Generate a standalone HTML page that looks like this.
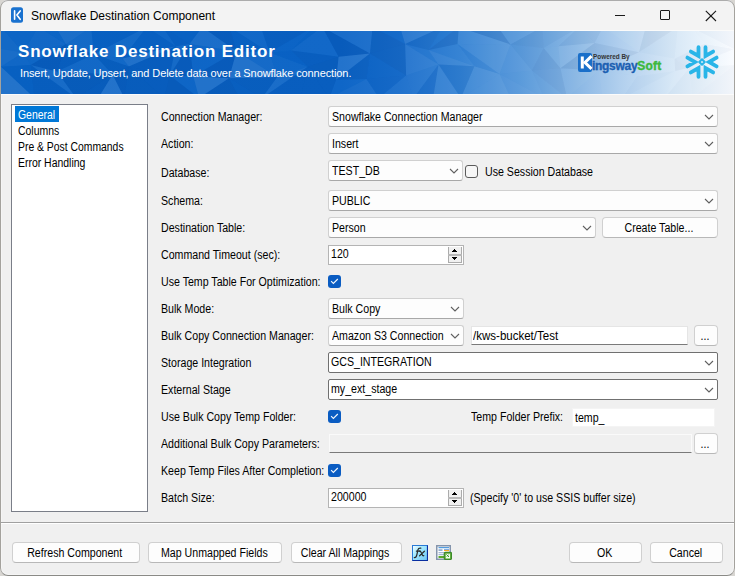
<!DOCTYPE html>
<html><head><meta charset="utf-8">
<style>
*{margin:0;padding:0;box-sizing:border-box}
html,body{width:735px;height:576px;overflow:hidden;background:#d8d6d2}
body{font-family:"Liberation Sans",sans-serif;font-size:12px;color:#000;position:relative}
.a{position:absolute}
#bg{position:absolute;left:0;top:0;width:735px;height:576px;border-radius:8px;background:#f0f0f0;overflow:hidden;box-shadow:inset 0 0 0 2px #f5f5f5}
#frame{position:absolute;left:0;top:0;width:735px;height:576px;border:1px solid #a4a29d;border-top-color:#acacac;border-bottom-color:#8a8a86;border-radius:8px}
#tb{position:absolute;left:0;top:0;width:735px;height:31px;background:#f3f3f3}
#banner{position:absolute;left:1px;top:31px;width:733px;height:63px;overflow:hidden;
background:linear-gradient(90deg,#0862c4 0px,#0a63c6 340px,#176ccb 400px,#3080d3 460px,#5a9adb 520px,#84b4e3 570px,#b0cfee 620px,#d6e7f6 670px,#edf5fc 710px,#fafcff 733px)}
.t{position:absolute;white-space:nowrap;font-size:12px;line-height:14px;transform:scaleX(0.885);transform-origin:0 0}
.ct{position:absolute;white-space:nowrap;font-size:12px;line-height:14px;text-align:center}
.ct span{display:inline-block;transform:scaleX(0.885);transform-origin:50% 0}
.cb{position:absolute;background:#fdfdfd;border:1px solid #d0d0d0;border-bottom-color:#a8a8a8;border-radius:3px}
.cbd{position:absolute;background:#fff;border:1px solid #707070;border-radius:2px}
.btn{position:absolute;background:#fdfdfd;border:1px solid #d0d0d0;border-bottom-color:#b8b8b8;border-radius:4px}
.tx{position:absolute;background:#fff;border:1px solid #e5e5e5;border-bottom:1px solid #7a7a7a}
.num{position:absolute;background:#fff;border:1px solid #b4b4b4}
.chk{position:absolute;width:13px;height:13px;background:#0a5cc2;border-radius:3px}
</style></head>
<body>
<div id="bg">

<div id="tb"></div>
<svg class="a" style="left:11px;top:7px" width="12" height="16" viewBox="0 0 12 16"><rect x="0" y="0.3" width="12" height="15.4" rx="2.5" fill="#1a72cf"/><path d="M3.6 3.9V12.3M9.2 3.9L5.9 8.1L9.2 12.3" stroke="#fff" stroke-width="1.6" fill="none" stroke-linecap="round" stroke-linejoin="round"/></svg>
<div class="t" style="left:31px;top:9px;font-size:12px;letter-spacing:0;transform:none">Snowflake Destination Component</div>
<div class="a" style="left:615px;top:15px;width:10px;height:1px;background:#1a1a1a"></div>
<div class="a" style="left:660px;top:10px;width:10px;height:10px;border:1px solid #1a1a1a;border-radius:1px"></div>
<svg class="a" style="left:705px;top:10px" width="12" height="12" viewBox="0 0 12 12"><path d="M0.8 0.8L11 11M11 0.8L0.8 11" stroke="#1a1a1a" stroke-width="1.1"/></svg>
<div class="a" style="left:1px;top:30px;width:733px;height:1px;background:#fbfbfa"></div>
<div id="banner"></div>
<svg class="a" style="left:1px;top:31px" width="733" height="63" viewBox="0 0 733 63"><polygon points="0.0,-4 37.2,-4 22.2,21.6" fill="#fff" fill-opacity="0.025"/><polygon points="0.0,-4 22.2,21.6 0.0,17.8" fill="#fff" fill-opacity="0.046"/><polygon points="0.0,17.8 22.2,21.6 0.0,35.7" fill="#fff" fill-opacity="0.071"/><polygon points="22.2,21.6 29.8,34.0 0.0,35.7" fill="#fff" fill-opacity="0.035"/><polygon points="0.0,35.7 29.8,34.0 33.5,67" fill="#002060" fill-opacity="0.022"/><polygon points="0.0,35.7 33.5,67 0.0,67" fill="#fff" fill-opacity="0.109"/><polygon points="37.2,-4 54.6,-4 64.9,13.3" fill="#fff" fill-opacity="0.019"/><polygon points="37.2,-4 64.9,13.3 22.2,21.6" fill="#fff" fill-opacity="0.044"/><polygon points="22.2,21.6 64.9,13.3 29.8,34.0" fill="#fff" fill-opacity="0.026"/><polygon points="64.9,13.3 56.0,40.6 29.8,34.0" fill="#002060" fill-opacity="0.105"/><polygon points="29.8,34.0 56.0,40.6 75.1,67" fill="#fff" fill-opacity="0.064"/><polygon points="29.8,34.0 75.1,67 33.5,67" fill="#002060" fill-opacity="0.063"/><polygon points="54.6,-4 90.2,-4 64.9,13.3" fill="#fff" fill-opacity="0.080"/><polygon points="90.2,-4 92.8,23.3 64.9,13.3" fill="#fff" fill-opacity="0.047"/><polygon points="64.9,13.3 92.8,23.3 56.0,40.6" fill="#002060" fill-opacity="0.063"/><polygon points="92.8,23.3 111.6,43.4 56.0,40.6" fill="#fff" fill-opacity="0.043"/><polygon points="56.0,40.6 111.6,43.4 75.1,67" fill="#002060" fill-opacity="0.108"/><polygon points="111.6,43.4 97.3,67 75.1,67" fill="#002060" fill-opacity="0.091"/><polygon points="90.2,-4 145.7,-4 92.8,23.3" fill="#002060" fill-opacity="0.033"/><polygon points="145.7,-4 121.5,27.5 92.8,23.3" fill="#fff" fill-opacity="0.046"/><polygon points="92.8,23.3 121.5,27.5 127.8,35.6" fill="#fff" fill-opacity="0.038"/><polygon points="92.8,23.3 127.8,35.6 111.6,43.4" fill="#002060" fill-opacity="0.079"/><polygon points="111.6,43.4 127.8,35.6 123.3,67" fill="#002060" fill-opacity="0.104"/><polygon points="111.6,43.4 123.3,67 97.3,67" fill="#fff" fill-opacity="0.106"/><polygon points="145.7,-4 161.6,-4 174.8,15.3" fill="#fff" fill-opacity="0.033"/><polygon points="145.7,-4 174.8,15.3 121.5,27.5" fill="#002060" fill-opacity="0.030"/><polygon points="121.5,27.5 174.8,15.3 127.8,35.6" fill="#fff" fill-opacity="0.094"/><polygon points="174.8,15.3 168.7,44.5 127.8,35.6" fill="#002060" fill-opacity="0.075"/><polygon points="127.8,35.6 168.7,44.5 163.3,67" fill="#002060" fill-opacity="0.076"/><polygon points="127.8,35.6 163.3,67 123.3,67" fill="#002060" fill-opacity="0.088"/><polygon points="161.6,-4 201.2,-4 188.5,13.1" fill="#002060" fill-opacity="0.028"/><polygon points="161.6,-4 188.5,13.1 174.8,15.3" fill="#002060" fill-opacity="0.043"/><polygon points="174.8,15.3 188.5,13.1 168.7,44.5" fill="#fff" fill-opacity="0.050"/><polygon points="188.5,13.1 192.3,45.2 168.7,44.5" fill="#002060" fill-opacity="0.105"/><polygon points="168.7,44.5 192.3,45.2 198.0,67" fill="#fff" fill-opacity="0.023"/><polygon points="168.7,44.5 198.0,67 163.3,67" fill="#002060" fill-opacity="0.100"/><polygon points="201.2,-4 228.4,-4 235.5,20.2" fill="#002060" fill-opacity="0.093"/><polygon points="201.2,-4 235.5,20.2 188.5,13.1" fill="#fff" fill-opacity="0.076"/><polygon points="188.5,13.1 235.5,20.2 192.3,45.2" fill="#fff" fill-opacity="0.023"/><polygon points="235.5,20.2 228.0,47.3 192.3,45.2" fill="#002060" fill-opacity="0.107"/><polygon points="192.3,45.2 228.0,47.3 198.0,67" fill="#fff" fill-opacity="0.103"/><polygon points="228.0,47.3 238.4,67 198.0,67" fill="#002060" fill-opacity="0.097"/><polygon points="228.4,-4 259.9,-4 268.5,21.5" fill="#fff" fill-opacity="0.035"/><polygon points="228.4,-4 268.5,21.5 235.5,20.2" fill="#002060" fill-opacity="0.034"/><polygon points="235.5,20.2 268.5,21.5 276.3,46.1" fill="#fff" fill-opacity="0.052"/><polygon points="235.5,20.2 276.3,46.1 228.0,47.3" fill="#fff" fill-opacity="0.101"/><polygon points="228.0,47.3 276.3,46.1 261.0,67" fill="#002060" fill-opacity="0.068"/><polygon points="228.0,47.3 261.0,67 238.4,67" fill="#002060" fill-opacity="0.052"/><polygon points="259.9,-4 312.3,-4 268.5,21.5" fill="#002060" fill-opacity="0.063"/><polygon points="312.3,-4 289.9,19.5 268.5,21.5" fill="#fff" fill-opacity="0.012"/><polygon points="268.5,21.5 289.9,19.5 306.5,35.7" fill="#002060" fill-opacity="0.010"/><polygon points="268.5,21.5 306.5,35.7 276.3,46.1" fill="#fff" fill-opacity="0.027"/><polygon points="276.3,46.1 306.5,35.7 261.0,67" fill="#fff" fill-opacity="0.066"/><polygon points="306.5,35.7 299.6,67 261.0,67" fill="#002060" fill-opacity="0.062"/><polygon points="312.3,-4 321.2,-4 289.9,19.5" fill="#002060" fill-opacity="0.021"/><polygon points="321.2,-4 337.6,25.8 289.9,19.5" fill="#fff" fill-opacity="0.035"/><polygon points="289.9,19.5 337.6,25.8 306.5,35.7" fill="#002060" fill-opacity="0.061"/><polygon points="337.6,25.8 335.1,48.8 306.5,35.7" fill="#002060" fill-opacity="0.086"/><polygon points="306.5,35.7 335.1,48.8 328.3,67" fill="#002060" fill-opacity="0.071"/><polygon points="306.5,35.7 328.3,67 299.6,67" fill="#002060" fill-opacity="0.061"/><polygon points="321.2,-4 371.6,-4 369.0,22.4" fill="#fff" fill-opacity="0.063"/><polygon points="321.2,-4 369.0,22.4 337.6,25.8" fill="#002060" fill-opacity="0.104"/><polygon points="337.6,25.8 369.0,22.4 335.1,48.8" fill="#fff" fill-opacity="0.104"/><polygon points="369.0,22.4 365.4,48.1 335.1,48.8" fill="#002060" fill-opacity="0.066"/><polygon points="335.1,48.8 365.4,48.1 328.3,67" fill="#fff" fill-opacity="0.024"/><polygon points="365.4,48.1 378.1,67 328.3,67" fill="#fff" fill-opacity="0.054"/><polygon points="371.6,-4 399.1,-4 404.1,13.1" fill="#002060" fill-opacity="0.017"/><polygon points="371.6,-4 404.1,13.1 369.0,22.4" fill="#002060" fill-opacity="0.088"/><polygon points="369.0,22.4 404.1,13.1 405.1,44.6" fill="#002060" fill-opacity="0.082"/><polygon points="369.0,22.4 405.1,44.6 365.4,48.1" fill="#002060" fill-opacity="0.024"/><polygon points="365.4,48.1 405.1,44.6 378.1,67" fill="#002060" fill-opacity="0.032"/><polygon points="405.1,44.6 412.6,67 378.1,67" fill="#fff" fill-opacity="0.050"/><polygon points="399.1,-4 441.5,-4 404.1,13.1" fill="#fff" fill-opacity="0.093"/><polygon points="441.5,-4 427.5,18.9 404.1,13.1" fill="#002060" fill-opacity="0.053"/><polygon points="404.1,13.1 427.5,18.9 437.5,33.4" fill="#fff" fill-opacity="0.030"/><polygon points="404.1,13.1 437.5,33.4 405.1,44.6" fill="#fff" fill-opacity="0.082"/><polygon points="405.1,44.6 437.5,33.4 412.6,67" fill="#fff" fill-opacity="0.054"/><polygon points="437.5,33.4 432.1,67 412.6,67" fill="#002060" fill-opacity="0.043"/><polygon points="441.5,-4 457.8,-4 427.5,18.9" fill="#002060" fill-opacity="0.016"/><polygon points="457.8,-4 456.5,13.1 427.5,18.9" fill="#002060" fill-opacity="0.089"/><polygon points="427.5,18.9 456.5,13.1 473.4,35.3" fill="#fff" fill-opacity="0.036"/><polygon points="427.5,18.9 473.4,35.3 437.5,33.4" fill="#fff" fill-opacity="0.088"/><polygon points="437.5,33.4 473.4,35.3 459.9,67" fill="#002060" fill-opacity="0.051"/><polygon points="437.5,33.4 459.9,67 432.1,67" fill="#fff" fill-opacity="0.092"/><polygon points="457.8,-4 496.9,-4 509.4,13.5" fill="#002060" fill-opacity="0.092"/><polygon points="457.8,-4 509.4,13.5 456.5,13.1" fill="#fff" fill-opacity="0.075"/><polygon points="456.5,13.1 509.4,13.5 498.5,42.9" fill="#fff" fill-opacity="0.071"/><polygon points="456.5,13.1 498.5,42.9 473.4,35.3" fill="#002060" fill-opacity="0.016"/><polygon points="473.4,35.3 498.5,42.9 459.9,67" fill="#fff" fill-opacity="0.084"/><polygon points="498.5,42.9 509.7,67 459.9,67" fill="#fff" fill-opacity="0.086"/><polygon points="496.9,-4 541.4,-4 509.4,13.5" fill="#fff" fill-opacity="0.046"/><polygon points="541.4,-4 542.6,17.0 509.4,13.5" fill="#002060" fill-opacity="0.052"/><polygon points="509.4,13.5 542.6,17.0 530.9,39.5" fill="#002060" fill-opacity="0.018"/><polygon points="509.4,13.5 530.9,39.5 498.5,42.9" fill="#fff" fill-opacity="0.029"/><polygon points="498.5,42.9 530.9,39.5 543.1,67" fill="#fff" fill-opacity="0.012"/><polygon points="498.5,42.9 543.1,67 509.7,67" fill="#fff" fill-opacity="0.034"/><polygon points="541.4,-4 578.3,-4 542.6,17.0" fill="#002060" fill-opacity="0.029"/><polygon points="578.3,-4 557.3,15.2 542.6,17.0" fill="#fff" fill-opacity="0.020"/><polygon points="542.6,17.0 557.3,15.2 559.4,37.2" fill="#fff" fill-opacity="0.026"/><polygon points="542.6,17.0 559.4,37.2 530.9,39.5" fill="#002060" fill-opacity="0.064"/><polygon points="530.9,39.5 559.4,37.2 566.0,67" fill="#002060" fill-opacity="0.043"/><polygon points="530.9,39.5 566.0,67 543.1,67" fill="#002060" fill-opacity="0.016"/><polygon points="578.3,-4 602.0,-4 593.6,12.1" fill="#002060" fill-opacity="0.038"/><polygon points="578.3,-4 593.6,12.1 557.3,15.2" fill="#002060" fill-opacity="0.034"/><polygon points="557.3,15.2 593.6,12.1 559.4,37.2" fill="#fff" fill-opacity="0.076"/><polygon points="593.6,12.1 597.6,39.6 559.4,37.2" fill="#002060" fill-opacity="0.062"/><polygon points="559.4,37.2 597.6,39.6 566.0,67" fill="#fff" fill-opacity="0.035"/><polygon points="597.6,39.6 601.5,67 566.0,67" fill="#fff" fill-opacity="0.010"/><polygon points="602.0,-4 644.8,-4 638.0,21.3" fill="#fff" fill-opacity="0.047"/><polygon points="602.0,-4 638.0,21.3 593.6,12.1" fill="#fff" fill-opacity="0.016"/><polygon points="593.6,12.1 638.0,21.3 597.6,39.6" fill="#002060" fill-opacity="0.058"/><polygon points="638.0,21.3 636.1,45.2 597.6,39.6" fill="#fff" fill-opacity="0.022"/><polygon points="597.6,39.6 636.1,45.2 621.4,67" fill="#fff" fill-opacity="0.032"/><polygon points="597.6,39.6 621.4,67 601.5,67" fill="#fff" fill-opacity="0.033"/><polygon points="644.8,-4 676.8,-4 638.0,21.3" fill="#002060" fill-opacity="0.053"/><polygon points="676.8,-4 673.6,27.7 638.0,21.3" fill="#002060" fill-opacity="0.016"/><polygon points="638.0,21.3 673.6,27.7 674.1,40.1" fill="#fff" fill-opacity="0.021"/><polygon points="638.0,21.3 674.1,40.1 636.1,45.2" fill="#fff" fill-opacity="0.024"/><polygon points="636.1,45.2 674.1,40.1 621.4,67" fill="#002060" fill-opacity="0.016"/><polygon points="674.1,40.1 663.7,67 621.4,67" fill="#fff" fill-opacity="0.005"/><polygon points="676.8,-4 689.4,-4 703.2,13.1" fill="#fff" fill-opacity="0.020"/><polygon points="676.8,-4 703.2,13.1 673.6,27.7" fill="#fff" fill-opacity="0.005"/><polygon points="673.6,27.7 703.2,13.1 688.4,36.8" fill="#002060" fill-opacity="0.028"/><polygon points="673.6,27.7 688.4,36.8 674.1,40.1" fill="#002060" fill-opacity="0.036"/><polygon points="674.1,40.1 688.4,36.8 663.7,67" fill="#fff" fill-opacity="0.043"/><polygon points="688.4,36.8 690.9,67 663.7,67" fill="#002060" fill-opacity="0.018"/><polygon points="689.4,-4 733.0,-4 733.0,18.1" fill="#002060" fill-opacity="0.027"/><polygon points="689.4,-4 733.0,18.1 703.2,13.1" fill="#002060" fill-opacity="0.005"/><polygon points="703.2,13.1 733.0,18.1 688.4,36.8" fill="#002060" fill-opacity="0.026"/><polygon points="733.0,18.1 733.0,33.9 688.4,36.8" fill="#fff" fill-opacity="0.030"/><polygon points="688.4,36.8 733.0,33.9 690.9,67" fill="#002060" fill-opacity="0.022"/><polygon points="733.0,33.9 733.0,67 690.9,67" fill="#002060" fill-opacity="0.030"/></svg>
<svg class="a" style="left:578px;top:53px" width="15" height="19" viewBox="0 0 15 19"><rect x="0" y="0" width="14" height="19" rx="2" fill="#1a6fc9"/><path d="M4.3 3.5V15.5" stroke="#fff" stroke-width="3" fill="none"/><path d="M13.5 3.2L7 9.5L13.5 15.8" stroke="#fff" stroke-width="3" fill="none"/></svg>
<div class="a" style="left:593px;top:53px;font:bold 6.4px 'Liberation Sans',sans-serif;color:#333;line-height:8px;white-space:nowrap">Powered By</div>
<div class="a" style="left:592px;top:59px;font:bold 12px 'Liberation Sans',sans-serif;color:#1c60b2;line-height:14px;white-space:nowrap;letter-spacing:-0.3px;-webkit-text-stroke:0.35px #1c60b2">ingsway<span style="color:#3cb83c;letter-spacing:0.2px;-webkit-text-stroke:0.35px #3cb83c">Soft</span></div>
<svg class="a" style="left:684px;top:44px" width="36" height="36" viewBox="0 0 36 36"><path d="M32.62 13.60L25.00 18.00L32.62 22.40M29.12 28.46L21.50 24.06L21.50 32.86M14.50 32.86L14.50 24.06L6.88 28.46M3.38 22.40L11.00 18.00L3.38 13.60M6.88 7.54L14.50 11.94L14.50 3.14M21.50 3.14L21.50 11.94L29.12 7.54" stroke="#29b5e8" stroke-width="3.8" fill="none" stroke-linecap="round" stroke-linejoin="miter" stroke-miterlimit="3"/><path d="M18 15.3L20.7 18L18 20.7L15.3 18Z" stroke="#29b5e8" stroke-width="2.1" fill="none" stroke-linejoin="round"/></svg>
<div class="a" style="left:18px;top:42px;font:bold 17px 'Liberation Sans',sans-serif;letter-spacing:0.8px;color:#fff;line-height:20px;white-space:nowrap">Snowflake Destination Editor</div>
<div class="a" style="left:20px;top:67px;font:11px 'Liberation Sans',sans-serif;letter-spacing:-0.1px;color:#fff;line-height:13px;white-space:nowrap">Insert, Update, Upsert, and Delete data over a Snowflake connection.</div>
<div class="a" style="left:1px;top:94px;width:733px;height:1px;background:#fbfbfb"></div>
<div class="a" style="left:11px;top:104px;width:137px;height:408px;background:#fff;border:1px solid #7a7e88"></div>
<div class="a" style="left:15px;top:106px;width:44px;height:16px;background:#0078d7"></div>
<div class="t" style="left:18px;top:108px;color:#fff;transform:scaleX(0.87)">General</div>
<div class="t" style="left:18px;top:124px;transform:scaleX(0.87)">Columns</div>
<div class="t" style="left:18px;top:140px;transform:scaleX(0.865)">Pre &amp; Post Commands</div>
<div class="t" style="left:18px;top:156px;transform:scaleX(0.87)">Error Handling</div>
<div class="t" style="left:161px;top:110px;">Connection Manager:</div>
<div class="t" style="left:161px;top:137px;">Action:</div>
<div class="t" style="left:161px;top:166px;">Database:</div>
<div class="t" style="left:161px;top:194px;">Schema:</div>
<div class="t" style="left:161px;top:221px;">Destination Table:</div>
<div class="t" style="left:161px;top:248px;">Command Timeout (sec):</div>
<div class="t" style="left:161px;top:275px;">Use Temp Table For Optimization:</div>
<div class="t" style="left:161px;top:302px;">Bulk Mode:</div>
<div class="t" style="left:161px;top:329px;">Bulk Copy Connection Manager:</div>
<div class="t" style="left:161px;top:356px;">Storage Integration</div>
<div class="t" style="left:161px;top:383px;">External Stage</div>
<div class="t" style="left:161px;top:410px;">Use Bulk Copy Temp Folder:</div>
<div class="t" style="left:161px;top:437px;">Additional Bulk Copy Parameters:</div>
<div class="t" style="left:161px;top:464px;">Keep Temp Files After Completion:</div>
<div class="t" style="left:161px;top:491px;">Batch Size:</div>
<div class="cb" style="left:328px;top:106px;width:390px;height:21px"></div><div class="t" style="left:332px;top:110px">Snowflake Connection Manager</div><svg class="a" style="left:704px;top:114px" width="10" height="6" viewBox="0 0 10 6"><polyline points="1,1 5,5 9,1" fill="none" stroke="#606060" stroke-width="1.1"/></svg>
<div class="cb" style="left:328px;top:133px;width:390px;height:21px"></div><div class="t" style="left:332px;top:137px">Insert</div><svg class="a" style="left:704px;top:141px" width="10" height="6" viewBox="0 0 10 6"><polyline points="1,1 5,5 9,1" fill="none" stroke="#606060" stroke-width="1.1"/></svg>
<div class="cb" style="left:328px;top:160px;width:135px;height:21px"></div><div class="t" style="left:332px;top:164px">TEST_DB</div><svg class="a" style="left:449px;top:168px" width="10" height="6" viewBox="0 0 10 6"><polyline points="1,1 5,5 9,1" fill="none" stroke="#606060" stroke-width="1.1"/></svg>
<div class="a" style="left:465px;top:165px;width:13px;height:13px;border:1px solid #5a5a5a;border-radius:3px;background:#f6f6f6"></div>
<div class="t" style="left:485px;top:165px;">Use Session Database</div>
<div class="cb" style="left:328px;top:190px;width:390px;height:21px"></div><div class="t" style="left:332px;top:194px">PUBLIC</div><svg class="a" style="left:704px;top:198px" width="10" height="6" viewBox="0 0 10 6"><polyline points="1,1 5,5 9,1" fill="none" stroke="#606060" stroke-width="1.1"/></svg>
<div class="cb" style="left:328px;top:217px;width:268px;height:21px"></div><div class="t" style="left:332px;top:221px">Person</div><svg class="a" style="left:582px;top:225px" width="10" height="6" viewBox="0 0 10 6"><polyline points="1,1 5,5 9,1" fill="none" stroke="#606060" stroke-width="1.1"/></svg>
<div class="btn" style="left:602px;top:217px;width:116px;height:21px"></div><div class="ct" style="left:601px;top:221px;width:116px"><span>Create Table...</span></div>
<div class="num" style="left:328px;top:245px;width:136px;height:20px"></div><div class="t" style="left:331px;top:247px">120</div><div class="a" style="left:448px;top:247px;width:14px;height:16px;background:#f0f0f0"></div><div class="a" style="left:448px;top:247px;width:1px;height:16px;background:#ababab"></div><div class="a" style="left:461px;top:247px;width:1px;height:16px;background:#ababab"></div><div class="a" style="left:448px;top:254px;width:14px;height:2px;background:#b8b8b8"></div><div class="a" style="left:448px;top:262px;width:14px;height:1px;background:#ababab"></div><div class="a" style="left:454px;top:249px;width:1px;height:1px;background:#000"></div><div class="a" style="left:453px;top:250px;width:3px;height:1px;background:#000"></div><div class="a" style="left:452px;top:251px;width:5px;height:1px;background:#000"></div><div class="a" style="left:452px;top:257px;width:5px;height:1px;background:#000"></div><div class="a" style="left:453px;top:258px;width:3px;height:1px;background:#000"></div><div class="a" style="left:454px;top:259px;width:1px;height:1px;background:#000"></div>
<div class="chk" style="left:328px;top:275px"><svg class="a" style="left:0;top:0" width="13" height="13" viewBox="0 0 13 13"><polyline points="3.1,6.2 5.35,8.45 9.8,4" fill="none" stroke="#f4f8fd" stroke-width="1.1"/></svg></div>
<div class="cb" style="left:328px;top:298px;width:136px;height:21px"></div><div class="t" style="left:332px;top:302px">Bulk Copy</div><svg class="a" style="left:450px;top:306px" width="10" height="6" viewBox="0 0 10 6"><polyline points="1,1 5,5 9,1" fill="none" stroke="#606060" stroke-width="1.1"/></svg>
<div class="cb" style="left:328px;top:325px;width:136px;height:21px"></div><div class="t" style="left:332px;top:329px">Amazon S3 Connection</div><svg class="a" style="left:450px;top:333px" width="10" height="6" viewBox="0 0 10 6"><polyline points="1,1 5,5 9,1" fill="none" stroke="#606060" stroke-width="1.1"/></svg>
<div class="tx" style="left:471px;top:326px;width:217px;height:19px"></div>
<div class="t" style="left:473px;top:329px;transform:scaleX(0.96)">/kws-bucket/Test</div>
<div class="btn" style="left:694px;top:325px;width:24px;height:21px"></div><div class="ct" style="left:693px;top:329px;width:24px"><span>...</span></div>
<div class="cbd" style="left:328px;top:352px;width:390px;height:21px"></div><div class="t" style="left:331px;top:355px">GCS_INTEGRATION</div><svg class="a" style="left:704px;top:360px" width="10" height="6" viewBox="0 0 10 6"><polyline points="1,1 5,5 9,1" fill="none" stroke="#606060" stroke-width="1.1"/></svg>
<div class="cbd" style="left:328px;top:379px;width:390px;height:21px"></div><div class="t" style="left:331px;top:382px">my_ext_stage</div><svg class="a" style="left:704px;top:387px" width="10" height="6" viewBox="0 0 10 6"><polyline points="1,1 5,5 9,1" fill="none" stroke="#606060" stroke-width="1.1"/></svg>
<div class="chk" style="left:328px;top:410px"><svg class="a" style="left:0;top:0" width="13" height="13" viewBox="0 0 13 13"><polyline points="3.1,6.2 5.35,8.45 9.8,4" fill="none" stroke="#f4f8fd" stroke-width="1.1"/></svg></div>
<div class="t" style="left:471px;top:410px;">Temp Folder Prefix:</div>
<div class="a" style="left:572px;top:408px;width:143px;height:19px;background:#fff;border:1px solid #f4f4f4"></div>
<div class="t" style="left:575px;top:411px;">temp_</div>
<div class="tx" style="left:329px;top:434px;width:363px;height:19px;background:#f0f0f0;border-color:#fafafa;border-bottom-color:#7a7a7a"></div>
<div class="btn" style="left:694px;top:433px;width:24px;height:21px"></div><div class="ct" style="left:693px;top:437px;width:24px"><span>...</span></div>
<div class="chk" style="left:328px;top:464px"><svg class="a" style="left:0;top:0" width="13" height="13" viewBox="0 0 13 13"><polyline points="3.1,6.2 5.35,8.45 9.8,4" fill="none" stroke="#f4f8fd" stroke-width="1.1"/></svg></div>
<div class="num" style="left:328px;top:488px;width:136px;height:20px"></div><div class="t" style="left:331px;top:490px">200000</div><div class="a" style="left:448px;top:490px;width:14px;height:16px;background:#f0f0f0"></div><div class="a" style="left:448px;top:490px;width:1px;height:16px;background:#ababab"></div><div class="a" style="left:461px;top:490px;width:1px;height:16px;background:#ababab"></div><div class="a" style="left:448px;top:497px;width:14px;height:2px;background:#b8b8b8"></div><div class="a" style="left:448px;top:505px;width:14px;height:1px;background:#ababab"></div><div class="a" style="left:454px;top:492px;width:1px;height:1px;background:#000"></div><div class="a" style="left:453px;top:493px;width:3px;height:1px;background:#000"></div><div class="a" style="left:452px;top:494px;width:5px;height:1px;background:#000"></div><div class="a" style="left:452px;top:500px;width:5px;height:1px;background:#000"></div><div class="a" style="left:453px;top:501px;width:3px;height:1px;background:#000"></div><div class="a" style="left:454px;top:502px;width:1px;height:1px;background:#000"></div>
<div class="t" style="left:470px;top:491px;">(Specify '0' to use SSIS buffer size)</div>
<div class="a" style="left:1px;top:522px;width:733px;height:1px;background:#a0a0a0"></div>
<div class="a" style="left:1px;top:523px;width:733px;height:1px;background:#fff"></div>
<div class="btn" style="left:12px;top:542px;width:128px;height:21px"></div><div class="ct" style="left:11px;top:546px;width:128px"><span>Refresh Component</span></div>
<div class="btn" style="left:148px;top:542px;width:134px;height:21px"></div><div class="ct" style="left:147px;top:546px;width:134px"><span>Map Unmapped Fields</span></div>
<div class="btn" style="left:291px;top:542px;width:111px;height:21px"></div><div class="ct" style="left:290px;top:546px;width:111px"><span>Clear All Mappings</span></div>
<div class="btn" style="left:569px;top:542px;width:73px;height:21px"></div><div class="ct" style="left:568px;top:546px;width:73px"><span>OK</span></div>
<div class="btn" style="left:650px;top:542px;width:73px;height:21px"></div><div class="ct" style="left:649px;top:546px;width:73px"><span>Cancel</span></div>
<svg class="a" style="left:412px;top:545px" width="16" height="16" viewBox="0 0 16 16"><defs><linearGradient id="fxg" x1="0" y1="0" x2="1" y2="1"><stop offset="0" stop-color="#ffffff"/><stop offset="0.35" stop-color="#a8ecff"/><stop offset="1" stop-color="#6cc4f6"/></linearGradient></defs><rect x="0.5" y="0.5" width="15" height="15" fill="url(#fxg)" stroke="#2a7ad6"/><path d="M15.5 0.5V15.5H0.5" stroke="#0a2ea0" stroke-width="1.2" fill="none"/><path d="M2.3 12.6Q4.2 12.8 4.9 9.6L5.9 4.8Q6.4 2.9 8.8 3.2M4.4 6.1H8.2" stroke="#2a2a2a" stroke-width="1.25" fill="none" stroke-linecap="round"/><path d="M7.6 6.2Q8.6 6 9.4 8L10.6 10.4Q11.2 11 11.8 10.6M12.4 6.2L7.6 10.8" stroke="#2a2a2a" stroke-width="1.2" fill="none" stroke-linecap="round"/></svg>
<svg class="a" style="left:436px;top:545px" width="16" height="16" viewBox="0 0 16 16"><rect x="0.75" y="0.75" width="13.5" height="13.5" fill="#fff" stroke="#8494ac" stroke-width="1.5"/><rect x="2.5" y="2.2" width="10.5" height="1" fill="#2a86d8"/><rect x="2.5" y="4.3" width="4" height="1.6" fill="#8aa4c8"/><rect x="8" y="4.2" width="5" height="0.9" fill="#6a9ad8"/><rect x="8" y="5.1" width="5" height="1" fill="#f4a010"/><rect x="2.5" y="7.2" width="10" height="1" fill="#8aa4c8"/><rect x="2.5" y="9.2" width="10" height="1" fill="#8aa4c8"/><rect x="2.5" y="11" width="6" height="2" fill="#5aaa2a"/><rect x="8.3" y="7.3" width="7.2" height="7.2" rx="1.2" fill="#68b040" stroke="#3a8a2a" stroke-width="1.2"/><path d="M9.8 8.8H14v4.6H9.8Z" fill="#f4fff0"/><path d="M10.4 9.4L13 12M12.6 9.6L10.8 11.6" stroke="#3a9a2a" stroke-width="1" fill="none"/></svg>
</div>
<div id="frame"></div>
</body></html>
